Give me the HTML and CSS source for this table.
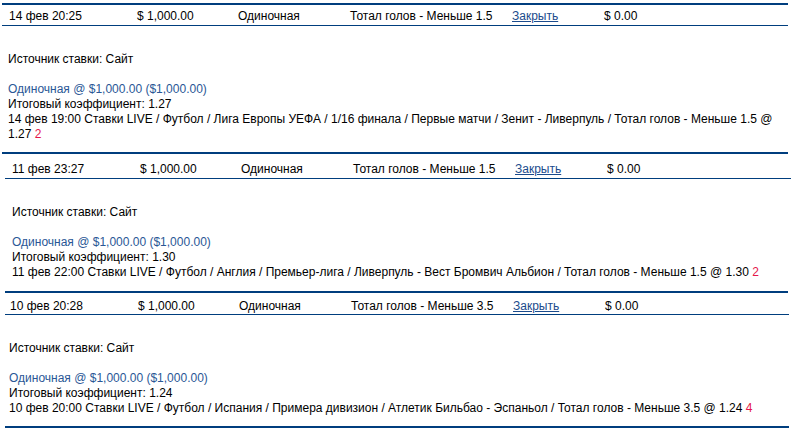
FILE: index.html
```html
<!DOCTYPE html>
<html lang="ru">
<head>
<meta charset="utf-8">
<title>Ставки</title>
<link rel="stylesheet" href="styles.css">
</head>
<body>
<div class="bets">
  <section class="bet bet--first">
    <div class="bet-head">
      <span>14 фев 20:25</span>
      <span>$ 1,000.00</span>
      <span>Одиночная</span>
      <span>Тотал голов - Меньше 1.5</span>
      <a class="close-link" href="#">Закрыть</a>
      <span>$ 0.00</span>
    </div>
    <div class="bet-body">
      <p class="source">Источник ставки: Сайт</p>
      <p class="summary"><span class="bet-type">Одиночная @ $1,000.00 ($1,000.00)</span><br>Итоговый коэффициент: 1.27<br>14 фев 19:00 Ставки LIVE / Футбол / Лига Европы УЕФА / 1/16 финала / Первые матчи / Зенит - Ливерпуль / Тотал голов - Меньше 1.5 @ 1.27 <span class="score">2</span></p>
    </div>
  </section>
  <section class="bet bet--second">
    <div class="bet-head">
      <span>11 фев 23:27</span>
      <span>$ 1,000.00</span>
      <span>Одиночная</span>
      <span>Тотал голов - Меньше 1.5</span>
      <a class="close-link" href="#">Закрыть</a>
      <span>$ 0.00</span>
    </div>
    <div class="bet-body">
      <p class="source">Источник ставки: Сайт</p>
      <p class="summary"><span class="bet-type">Одиночная @ $1,000.00 ($1,000.00)</span><br>Итоговый коэффициент: 1.30<br>11 фев 22:00 Ставки LIVE / Футбол / Англия / Премьер-лига / Ливерпуль - Вест Бромвич Альбион / Тотал голов - Меньше 1.5 @ 1.30 <span class="score">2</span></p>
    </div>
  </section>
  <section class="bet bet--third">
    <div class="bet-head">
      <span>10 фев 20:28</span>
      <span>$ 1,000.00</span>
      <span>Одиночная</span>
      <span>Тотал голов - Меньше 3.5</span>
      <a class="close-link" href="#">Закрыть</a>
      <span>$ 0.00</span>
    </div>
    <div class="bet-body">
      <p class="source">Источник ставки: Сайт</p>
      <p class="summary"><span class="bet-type">Одиночная @ $1,000.00 ($1,000.00)</span><br>Итоговый коэффициент: 1.24<br>10 фев 20:00 Ставки LIVE / Футбол / Испания / Примера дивизион / Атлетик Бильбао - Эспаньол / Тотал голов - Меньше 3.5 @ 1.24 <span class="score">4</span></p>
    </div>
  </section>
</div>
</body>
</html>
```
FILE: styles.css
```css
html, body {
  margin: 0;
  padding: 0;
  background: #ffffff;
}

body {
  font-family: "Liberation Sans", Arial, sans-serif;
  font-size: 12px;
  line-height: 15px;
  color: #000000;
}

.bets {
  padding-top: 3px;
}

.bet {
  border-bottom: 2px solid #003e7e;
}

.bet--first {
  margin-left: 2px;
  width: 786px;
  border-top: 2px solid #003e7e;
}

.bet--second {
  margin-left: 5px;
  width: 783px;
}

.bet--third {
  margin-left: 5px;
  width: 784px;
}

.bet-head {
  display: grid;
  grid-template-columns: 128px 101px 112px 162px 92px 1fr;
  padding: 4px 0 1px 7px;
  border-bottom: 1px solid #003e7e;
  white-space: nowrap;
}

.bet--second .bet-head {
  padding-top: 8px;
  padding-bottom: 1px;
  margin-right: -3px;
}

.bet--third .bet-head {
  padding: 6px 0 0 5px;
}

.close-link {
  color: #1b4b8c;
  text-decoration: underline;
  justify-self: start;
}

.bet-body {
  padding: 26px 0 10px 6px;
}

.bet--second .bet-body {
  padding-left: 7px;
  padding-bottom: 11px;
}

.bet--third .bet-body {
  padding-left: 4px;
}

.source {
  margin: 0 0 15px;
}

.summary {
  margin: 0;
}

.bet-type {
  color: #2a5796;
}

.score {
  color: #e5164a;
}
```
